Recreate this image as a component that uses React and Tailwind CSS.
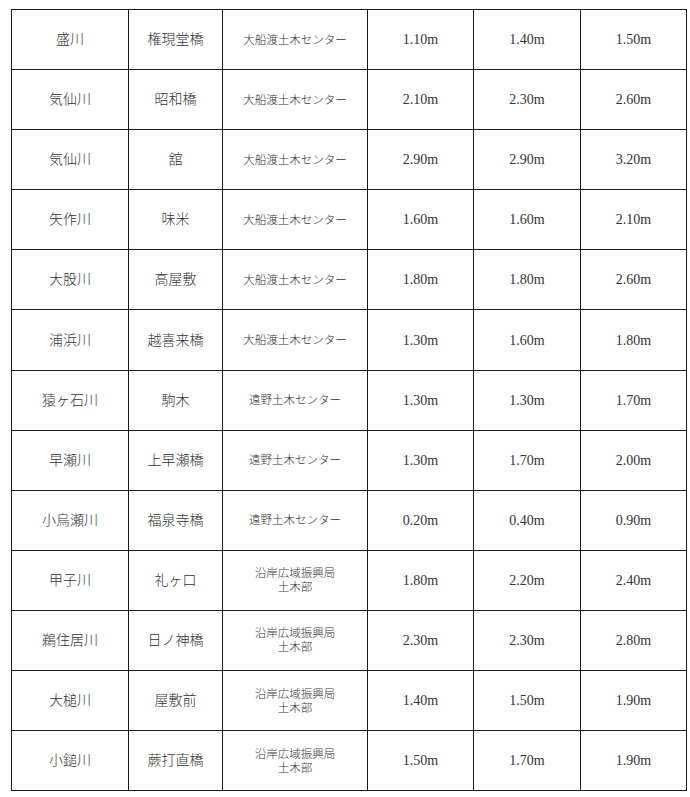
const rows = [
  ["盛川", "権現堂橋", "大船渡土木センター", "1.10m", "1.40m", "1.50m"],
  ["気仙川", "昭和橋", "大船渡土木センター", "2.10m", "2.30m", "2.60m"],
  ["気仙川", "舘", "大船渡土木センター", "2.90m", "2.90m", "3.20m"],
  ["矢作川", "味米", "大船渡土木センター", "1.60m", "1.60m", "2.10m"],
  ["大股川", "高屋敷", "大船渡土木センター", "1.80m", "1.80m", "2.60m"],
  ["浦浜川", "越喜来橋", "大船渡土木センター", "1.30m", "1.60m", "1.80m"],
  ["猿ヶ石川", "駒木", "遠野土木センター", "1.30m", "1.30m", "1.70m"],
  ["早瀬川", "上早瀬橋", "遠野土木センター", "1.30m", "1.70m", "2.00m"],
  ["小烏瀬川", "福泉寺橋", "遠野土木センター", "0.20m", "0.40m", "0.90m"],
  ["甲子川", "礼ヶ口", "沿岸広域振興局\n土木部", "1.80m", "2.20m", "2.40m"],
  ["鵜住居川", "日ノ神橋", "沿岸広域振興局\n土木部", "2.30m", "2.30m", "2.80m"],
  ["大槌川", "屋敷前", "沿岸広域振興局\n土木部", "1.40m", "1.50m", "1.90m"],
  ["小鎚川", "蕨打直橋", "沿岸広域振興局\n土木部", "1.50m", "1.70m", "1.90m"],
];

const cell = "border-[1.5px] border-[#1a1a1a] text-center align-middle p-0";

export default function App() {
  return (
    <div
      className="bg-white w-[690px] h-[797px] pt-[9px] pl-[11px] text-[#333]"
      style={{ fontFamily: '"Liberation Serif", "Noto Sans CJK JP", serif' }}
    >
      <table className="table-fixed border-collapse w-[675px]">
        <colgroup>
          <col className="w-[117px]" />
          <col className="w-[94px]" />
          <col className="w-[145px]" />
          <col className="w-[106px]" />
          <col className="w-[107px]" />
          <col className="w-[106px]" />
        </colgroup>
        <tbody>
          {rows.map((r, i) => (
            <tr key={i} className="h-[60.1px]">
              <td className={`${cell} text-[14px] font-light`}>{r[0]}</td>
              <td className={`${cell} text-[14px] font-light`}>{r[1]}</td>
              <td className={`${cell} text-[11.5px] leading-[14px] font-light whitespace-pre-line`}>
                {r[2]}
              </td>
              <td className={`${cell} text-[14px]`}>{r[3]}</td>
              <td className={`${cell} text-[14px]`}>{r[4]}</td>
              <td className={`${cell} text-[14px]`}>{r[5]}</td>
            </tr>
          ))}
        </tbody>
      </table>
    </div>
  );
}
